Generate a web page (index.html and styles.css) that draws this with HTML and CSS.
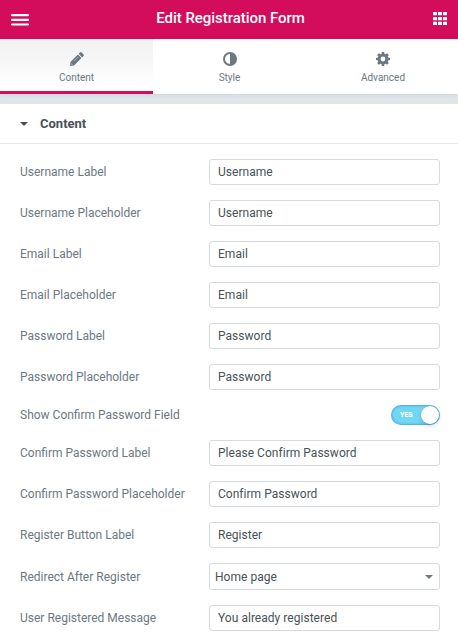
FILE: index.html
```html
<!DOCTYPE html>
<html lang="en">
<head>
<meta charset="utf-8">
<title>Edit Registration Form</title>
<link rel="stylesheet" href="styles.css">
</head>
<body>
<header class="header">
  <svg class="menu-icon" width="18" height="12" viewBox="0 0 18 12"><path fill="#fff" d="M1 0h16l1 .5v1.200l-1 .5H1l-1-.5V.5zM1 4.700h16l1 .5v1.200l-1 .5H1l-1-.5V5.200zM1 9.400h16l1 .5v1.200l-1 .5H1l-1-.5V9.900z"/></svg>
  <h1 class="title">Edit Registration Form</h1>
  <svg class="grid-icon" width="14" height="13" viewBox="0 0 14 13"><path fill="#fff" d="M0 0h4v3.300H0zM5 0h4v3.300H5zM10 0h4v3.300h-4zM0 5h4v3.200H0zM5 5h4v3.200H5zM10 5h4v3.200h-4zM0 9.800h4V13H0zM5 9.800h4V13H5zM10 9.800h4V13h-4z"/></svg>
</header>
<nav class="tabs">
  <div class="tab active">
    <svg width="14" height="14" viewBox="0 0 14 14"><g fill="#6d7882"><path d="M9.900.5a1.200 1.200 0 0 1 1.700 0l1.900 1.900a1.200 1.200 0 0 1 0 1.700l-1.300 1.300-3.600-3.600zM7.900 2.500l3.600 3.600-7.500 7.500L.400 14 0 13.600l.4-3.600z"/></g><path d="M3.800 9.200 8 5M1.500 11.500v1H2.500" fill="none" stroke="#d5d9dc" stroke-width=".5"/></svg>
    <span>Content</span>
  </div>
  <div class="tab">
    <svg width="14" height="14" viewBox="0 0 14 14"><circle cx="7" cy="7" r="6" fill="none" stroke="#6d7882" stroke-width="2"/><path d="M7 1a6 6 0 0 1 0 12z" fill="#6d7882"/></svg>
    <span>Style</span>
  </div>
  <div class="tab">
    <svg width="14" height="14" viewBox="0 0 14 14"><path fill="#6d7882" fill-rule="evenodd" d="M5.900 0h2.200l.4 1.900 1 .4 1.600-1.100 1.700 1.700-1.100 1.600.4 1 1.900.4v2.200l-1.900.4-.4 1 1.100 1.600-1.700 1.700-1.600-1.100-1 .4L8.100 14H5.900l-.4-1.900-1-.4-1.600 1.100-1.700-1.700 1.100-1.600-.4-1L0 8.100V5.900l1.900-.4.4-1-1.100-1.600 1.700-1.700 1.600 1.100 1-.4zM7 4.600a2.400 2.400 0 1 0 0 4.800 2.400 2.400 0 0 0 0-4.800z"/></svg>
    <span>Advanced</span>
  </div>
</nav>
<section class="panel">
  <h2 class="section-title"><svg width="8" height="4" viewBox="0 0 8 4"><path fill="#495157" d="M0 0h8L4 4z"/></svg>Content</h2>
  <div class="controls">
    <div class="row"><label>Username Label</label><div class="field">Username</div></div>
    <div class="row"><label>Username Placeholder</label><div class="field">Username</div></div>
    <div class="row"><label>Email Label</label><div class="field">Email</div></div>
    <div class="row"><label>Email Placeholder</label><div class="field">Email</div></div>
    <div class="row"><label>Password Label</label><div class="field">Password</div></div>
    <div class="row"><label>Password Placeholder</label><div class="field">Password</div></div>
    <div class="row"><label>Show Confirm Password Field</label><div class="switch"><span>YES</span><i class="knob"></i></div></div>
    <div class="row"><label>Confirm Password Label</label><div class="field">Please Confirm Password</div></div>
    <div class="row"><label>Confirm Password Placeholder</label><div class="field">Confirm Password</div></div>
    <div class="row"><label>Register Button Label</label><div class="field">Register</div></div>
    <div class="row"><label>Redirect After Register</label><div class="field select">Home page<svg width="8" height="4" viewBox="0 0 8 4"><path fill="#6d7882" d="M0 0h8L4 4z"/></svg></div></div>
    <div class="row"><label>User Registered Message</label><div class="field">You already registered</div></div>
  </div>
</section>
</body>
</html>
```
FILE: styles.css
```css
* { box-sizing: border-box; }
body {
  margin: 0;
  height: 637px;
  overflow: hidden;
  background: #e0e5e9;
  font-family: Roboto, "Liberation Sans", sans-serif;
  font-size: 12px;
  color: #6d7882;
}
svg { display: block; flex: none; }
.header {
  height: 39px;
  padding: 0 11px;
  display: flex;
  align-items: center;
  justify-content: space-between;
  background: #d30c5c;
}
.grid-icon { margin-bottom: 2px; }
.title {
  margin: 0 1px 4px 0;
  font-size: 15px;
  line-height: 20px;
  font-weight: 500;
  letter-spacing: -.04px;
  color: #fff;
}
.tabs {
  height: 55px;
  display: grid;
  grid-template-columns: 153px 153px 154px;
  background: #fff;
  box-shadow: 0 1px 5px rgba(0, 0, 0, .07);
}
.tab {
  display: flex;
  flex-direction: column;
  align-items: center;
  padding-top: 13px;
  gap: 6px;
  font-size: 10px;
  line-height: 12px;
}
.tab.active {
  background: linear-gradient(#f1f1f1, #fff);
  border-bottom: 3px solid #d30c5c;
}
.panel {
  margin-top: 10px;
  height: 533px;
  background: #fff;
}
.section-title {
  margin: 0;
  height: 40px;
  padding: 0 20px;
  display: flex;
  align-items: center;
  gap: 12px;
  border-bottom: 1px solid #e6e9ec;
  font-size: 13px;
  font-weight: 700;
  color: #495157;
}
.controls {
  display: flex;
  flex-direction: column;
  gap: 15px;
  padding: 15px 18px 0 20px;
}
.row {
  display: flex;
  align-items: center;
  justify-content: space-between;
}
.field {
  width: 231px;
  height: 26px;
  padding: 0 9px 0 8px;
  border: 1px solid #d5dadf;
  border-radius: 3px;
  line-height: 24px;
  letter-spacing: .03px;
  color: #495157;
}
.select {
  height: 27px;
  padding: 1px 6px 0 5px;
  display: flex;
  align-items: center;
  justify-content: space-between;
  line-height: 24px;
}
.switch {
  width: 49px;
  height: 20px;
  padding: 1px 1px 1px 9px;
  display: flex;
  align-items: center;
  justify-content: space-between;
  border-radius: 10px;
  background: #71d7f7;
  box-shadow: inset 0 0 2px 1px rgba(0, 70, 90, .3);
  font-size: 7px;
  font-weight: 900;
  color: #fff;
}
.knob {
  width: 18px;
  height: 18px;
  border-radius: 50%;
  background: #fff;
  box-shadow: 0 2px 4px rgba(0, 0, 0, .18);
}
```
